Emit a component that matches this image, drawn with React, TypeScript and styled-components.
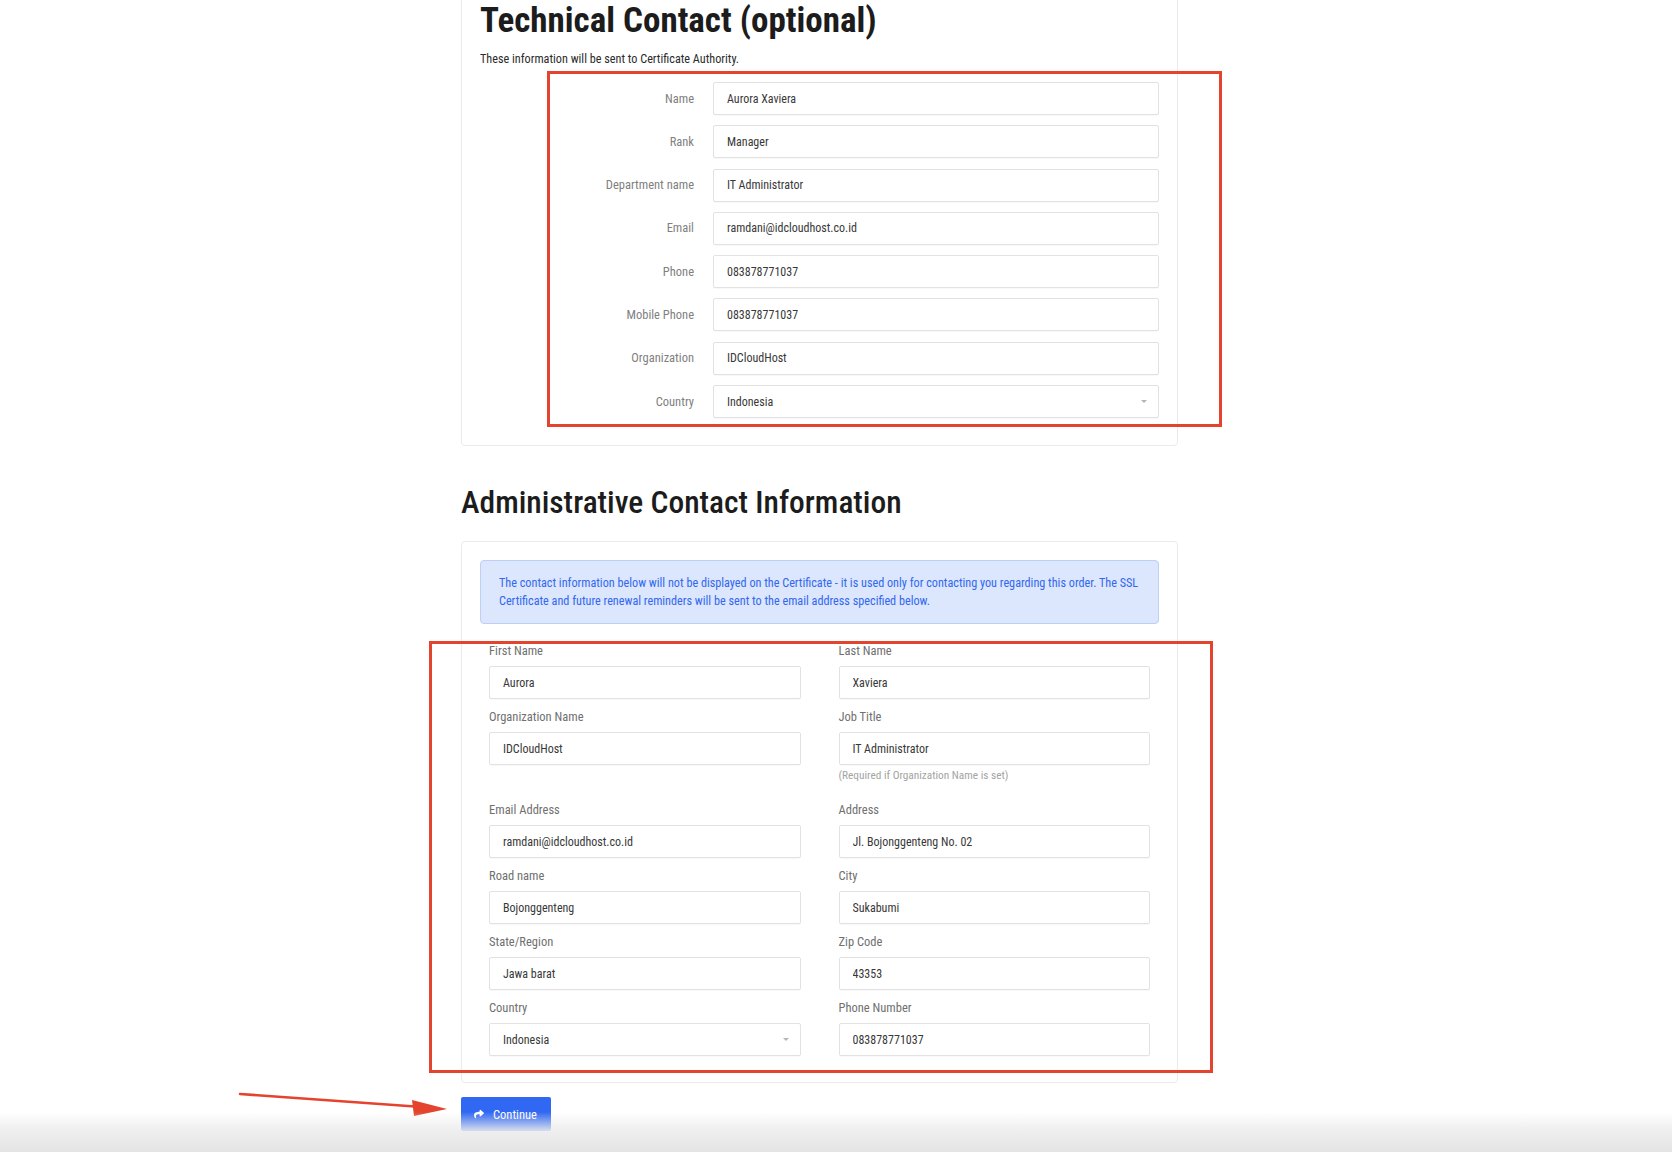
import React from 'react';
import styled, { createGlobalStyle } from 'styled-components';
import { FaShare } from 'react-icons/fa';

type Field = { label: string; value: string; select?: boolean; help?: string };

const techFields: Field[] = [
  { label: 'Name', value: 'Aurora Xaviera' },
  { label: 'Rank', value: 'Manager' },
  { label: 'Department name', value: 'IT Administrator' },
  { label: 'Email', value: 'ramdani@idcloudhost.co.id' },
  { label: 'Phone', value: '083878771037' },
  { label: 'Mobile Phone', value: '083878771037' },
  { label: 'Organization', value: 'IDCloudHost' },
  { label: 'Country', value: 'Indonesia', select: true },
];

const adminFields: Field[] = [
  { label: 'First Name', value: 'Aurora' },
  { label: 'Last Name', value: 'Xaviera' },
  { label: 'Organization Name', value: 'IDCloudHost' },
  { label: 'Job Title', value: 'IT Administrator', help: '(Required if Organization Name is set)' },
  { label: 'Email Address', value: 'ramdani@idcloudhost.co.id' },
  { label: 'Address', value: 'Jl. Bojonggenteng No. 02' },
  { label: 'Road name', value: 'Bojonggenteng' },
  { label: 'City', value: 'Sukabumi' },
  { label: 'State/Region', value: 'Jawa barat' },
  { label: 'Zip Code', value: '43353' },
  { label: 'Country', value: 'Indonesia', select: true },
  { label: 'Phone Number', value: '083878771037' },
];

const Control: React.FC<{ field: Field }> = ({ field }) =>
  field.select ? (
    <SelectBox>
      <span>{field.value}</span>
      <Caret />
    </SelectBox>
  ) : (
    <Input defaultValue={field.value} readOnly />
  );

const App: React.FC = () => {
  return (
    <Page>
      <GlobalStyle />
      <Content>
        <Card $top>
          <Title>Technical Contact (optional)</Title>
          <Subtitle>These information will be sent to Certificate Authority.</Subtitle>
          <HorizontalForm>
            {techFields.map((f) => (
              <React.Fragment key={f.label}>
                <SideLabel>{f.label}</SideLabel>
                <Control field={f} />
              </React.Fragment>
            ))}
          </HorizontalForm>
        </Card>

        <SectionHeading>Administrative Contact Information</SectionHeading>

        <Card>
          <Alert>
            The contact information below will not be displayed on the Certificate - it is used only for
            contacting you regarding this order. The SSL
            <br />
            Certificate and future renewal reminders will be sent to the email address specified below.
          </Alert>
          <FieldGrid>
            {adminFields.map((f) => (
              <FormGroup key={f.label}>
                <TopLabel>{f.label}</TopLabel>
                <Control field={f} />
                {f.help && <HelpText>{f.help}</HelpText>}
              </FormGroup>
            ))}
          </FieldGrid>
        </Card>

        <ContinueButton type="button">
          <FaShare size={10} />
          Continue
        </ContinueButton>
      </Content>

      <Annotation $x={547} $y={71} $w={675} $h={356} />
      <Annotation $x={429} $y={641} $w={784} $h={432} />
      <ArrowSvg width="230" height="40" viewBox="0 0 230 40">
        <line x1="10" y1="9" x2="192" y2="22" stroke="#e4432d" strokeWidth="2.6" strokeLinecap="round" />
        <polygon points="217,24 182,15 184,31" fill="#e4432d" />
      </ArrowSvg>
      <BottomShade />
    </Page>
  );
};

export default App;

const GlobalStyle = createGlobalStyle`
  html, body {
    margin: 0;
    padding: 0;
    background: #fff;
  }
  body {
    font-family: "Roboto Condensed", Roboto, "Liberation Sans", sans-serif;
    color: #333;
  }
  * {
    box-sizing: border-box;
  }
`;

const Page = styled.div`
  position: relative;
  height: 1152px;
  overflow: hidden;
  background: #fff;
`;

const Content = styled.div`
  width: 717px;
  margin-left: 461px;
  display: flex;
  flex-direction: column;
  align-items: flex-start;
`;

const Card = styled.div<{ $top?: boolean }>`
  align-self: stretch;
  margin-top: ${({ $top }) => ($top ? '-25px' : '0')};
  padding: ${({ $top }) => ($top ? '24px 18px 27px' : '18px 18px 26px')};
  border: 1px solid #ebebeb;
  border-radius: 4px;
  background: #fff;
`;

const Title = styled.h2`
  margin: 0;
  font-size: 35px;
  line-height: 41px;
  font-weight: 700;
  color: #1c1c1c;
`;

const Subtitle = styled.p`
  margin: 10px 0 0;
  font-size: 12.2px;
  line-height: 16px;
  color: #2b2b2b;
`;

const HorizontalForm = styled.div`
  margin-top: 15px;
  display: grid;
  grid-template-columns: 214px 1fr;
  column-gap: 19px;
  row-gap: 10.3px;
  align-items: center;
`;

const SideLabel = styled.label`
  text-align: right;
  font-size: 12.5px;
  line-height: 14px;
  color: #7f7f7f;
`;

const Input = styled.input`
  display: block;
  width: 100%;
  height: 33px;
  padding: 0 13px;
  border: 1px solid #e2e2e2;
  border-radius: 2px;
  box-shadow: 0 1px 1px rgba(0, 0, 0, 0.03);
  background: #fff;
  font-family: inherit;
  font-size: 12px;
  color: #383838;
  outline: none;
`;

const SelectBox = styled.div`
  display: flex;
  align-items: center;
  justify-content: space-between;
  height: 33px;
  padding: 0 11px 0 13px;
  border: 1px solid #e2e2e2;
  border-radius: 2px;
  box-shadow: 0 1px 1px rgba(0, 0, 0, 0.03);
  background: #fff;
  font-size: 12px;
  color: #383838;
`;

const Caret = styled.span`
  width: 0;
  height: 0;
  border-left: 3px solid transparent;
  border-right: 3px solid transparent;
  border-top: 3px solid #b5b5b5;
`;

const SectionHeading = styled.h2`
  margin: 38px 0 19px;
  font-size: 31.5px;
  line-height: 38px;
  font-weight: 500;
  color: #1c1c1c;
`;

const Alert = styled.div`
  padding: 13px 12px 13px 18px;
  border: 1px solid #bdd0f8;
  border-radius: 4px;
  background: #dce6fc;
  color: #3168f0;
  font-size: 12.2px;
  line-height: 18px;
`;

const FieldGrid = styled.div`
  margin-top: 20px;
  padding: 0 9px;
  display: grid;
  grid-template-columns: 1fr 1fr;
  column-gap: 38px;
  row-gap: 11px;
  align-items: start;
`;

const FormGroup = styled.div`
  display: flex;
  flex-direction: column;
`;

const TopLabel = styled.label`
  margin-bottom: 8px;
  font-size: 12.5px;
  line-height: 14px;
  color: #707070;
`;

const HelpText = styled.span`
  margin: 4px 0 9px;
  font-size: 11.3px;
  line-height: 14px;
  color: #a3a3a3;
`;

const ContinueButton = styled.button`
  margin-top: 14px;
  height: 34px;
  display: flex;
  align-items: center;
  gap: 9px;
  padding: 0 14px 0 13px;
  border: none;
  border-radius: 2px;
  background: #3067f3;
  color: #fff;
  font-family: inherit;
  font-size: 12.5px;
  cursor: pointer;
`;

const Annotation = styled.div<{ $x: number; $y: number; $w: number; $h: number }>`
  position: absolute;
  left: ${({ $x }) => $x}px;
  top: ${({ $y }) => $y}px;
  width: ${({ $w }) => $w}px;
  height: ${({ $h }) => $h}px;
  border: 3px solid #e4432d;
  pointer-events: none;
`;

const ArrowSvg = styled.svg`
  position: absolute;
  left: 230px;
  top: 1085px;
  pointer-events: none;
`;

const BottomShade = styled.div`
  position: absolute;
  left: 0;
  right: 0;
  bottom: 0;
  height: 40px;
  background: linear-gradient(
    to bottom,
    rgba(230, 230, 230, 0) 0%,
    rgba(236, 236, 236, 0.85) 45%,
    #e4e4e4 100%
  );
  pointer-events: none;
`;
